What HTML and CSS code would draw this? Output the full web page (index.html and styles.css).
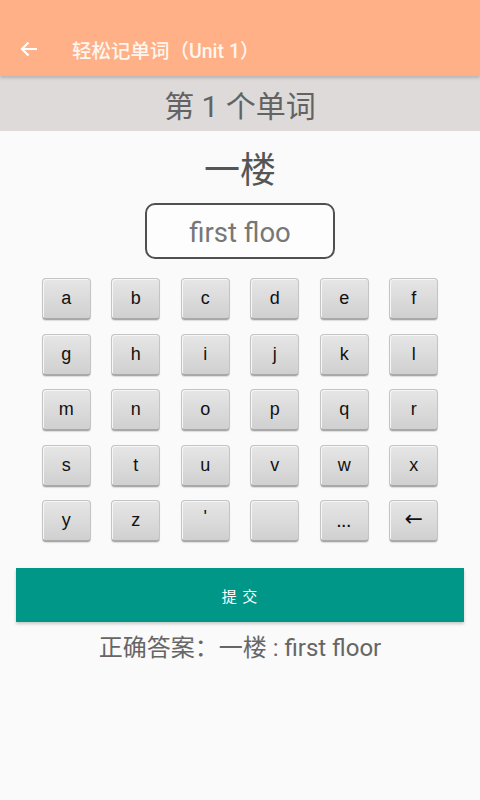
FILE: index.html
```html
<!DOCTYPE html>
<html lang="zh">
<head>
<meta charset="utf-8">
<link rel="stylesheet" href="styles.css">
</head>
<body>
<header class="appbar">
  <svg class="back" width="18" height="16" viewBox="0 0 18 16"><path d="M17 8H2M8.5 1.5L2 8l6.5 6.5" fill="none" stroke="#fff" stroke-width="2.2"/></svg>
  <span class="appbar-title">轻松记单词（Unit 1）</span>
</header>
<div class="subbar">第 1 个单词</div>
<main class="content">
  <div class="word">一楼</div>
  <div class="answer-box">first floo</div>
  <div class="keyboard">
    <div class="key">a</div><div class="key">b</div><div class="key">c</div><div class="key">d</div><div class="key">e</div><div class="key">f</div>
    <div class="key">g</div><div class="key">h</div><div class="key">i</div><div class="key">j</div><div class="key">k</div><div class="key">l</div>
    <div class="key">m</div><div class="key">n</div><div class="key">o</div><div class="key">p</div><div class="key">q</div><div class="key">r</div>
    <div class="key">s</div><div class="key">t</div><div class="key">u</div><div class="key">v</div><div class="key">w</div><div class="key">x</div>
    <div class="key">y</div><div class="key">z</div><div class="key key-top">'</div><div class="key"></div><div class="key key-dots">...</div><div class="key key-arrow">←</div>
  </div>
  <button class="submit">提 交</button>
  <div class="result">正确答案：一楼 : first floor</div>
</main>
</body>
</html>
```
FILE: styles.css
```css
html, body {
  margin: 0;
  padding: 0;
}
body {
  width: 480px;
  height: 800px;
  background: #fafafa;
  font-family: Roboto, "Noto Sans CJK SC", sans-serif;
  overflow: hidden;
}
.appbar {
  height: 76px;
  background: #ffb086;
  display: flex;
  align-items: center;
  padding: 22px 0 0 20px;
  box-sizing: border-box;
  box-shadow: 0 2px 3px rgba(0,0,0,0.18);
  position: relative;
  z-index: 2;
}
.back {
  display: block;
}
.appbar-title {
  margin-left: 34px;
  color: #fff6ef;
  font-size: 19.5px;
  font-weight: 500;
}
.subbar {
  height: 55px;
  background: #dddad9;
  color: #636363;
  font-size: 30px;
  display: flex;
  align-items: center;
  justify-content: center;
}
.content {
  display: flex;
  flex-direction: column;
  align-items: center;
}
.word {
  margin-top: 14px;
  font-size: 36px;
  line-height: 52px;
  color: #555;
}
.answer-box {
  margin-top: 6px;
  width: 190px;
  height: 56px;
  box-sizing: border-box;
  border: 2px solid #505050;
  border-radius: 10px;
  display: flex;
  align-items: center;
  justify-content: center;
  font-size: 27.5px;
  color: #777;
  background: #fdfdfd;
  padding-top: 3px;
}
.keyboard {
  margin-top: 19px;
  display: grid;
  grid-template-columns: repeat(6, 49px);
  grid-auto-rows: 42px;
  column-gap: 20.5px;
  row-gap: 13.5px;
}
.key {
  box-sizing: border-box;
  border-radius: 4px;
  background: linear-gradient(180deg, #e6e6e6 0%, #dadada 55%, #d0d0d0 100%);
  border: 1px solid #c4c4c4;
  border-bottom: 2px solid #a9a9a9;
  box-shadow: inset 1px 1px 0 #f6f6f6, 0 1px 1px rgba(0,0,0,0.12);
  display: flex;
  align-items: center;
  justify-content: center;
  font-family: "Liberation Sans", Arial, sans-serif;
  font-size: 18px;
  color: #111;
}
.key-top {
  align-items: flex-start;
  padding-top: 6px;
}
.key-dots {
  align-items: flex-end;
  padding-bottom: 10px;
  letter-spacing: 1px;
  font-weight: bold;
  font-size: 14px;
}
.key-arrow {
  font-size: 22px;
  font-family: "DejaVu Sans", sans-serif;
  padding-bottom: 4px;
}
.submit {
  margin-top: 26px;
  width: 448px;
  height: 54px;
  border: none;
  background: #009788;
  color: #fff;
  font-family: "Noto Sans CJK SC", sans-serif;
  font-size: 15px;
  letter-spacing: 1px;
  box-shadow: 0 2px 3px rgba(0,0,0,0.2);
  padding: 0;
}
.result {
  margin-top: 9px;
  font-size: 24px;
  color: #666;
  line-height: 34px;
}
```
